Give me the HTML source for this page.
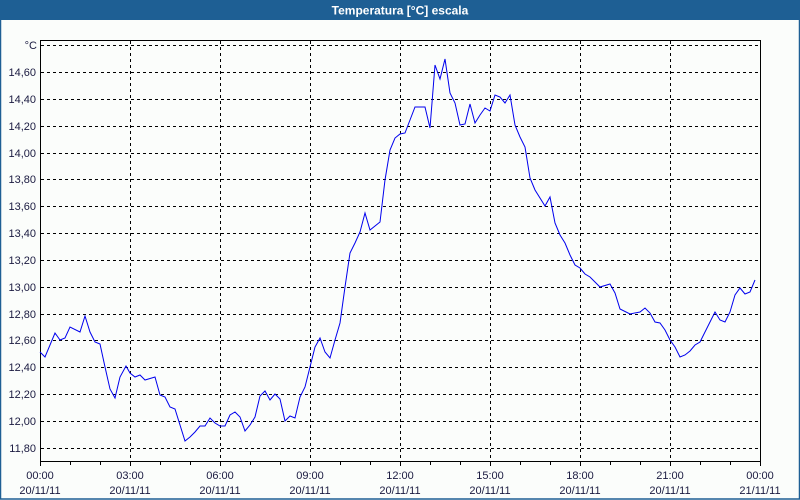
<!DOCTYPE html>
<html><head><meta charset="utf-8"><style>
html,body{margin:0;padding:0}
body{width:800px;height:500px;overflow:hidden;background:#fbfdfb;font-family:"Liberation Sans",sans-serif}
</style></head><body>
<svg width="800" height="500" xmlns="http://www.w3.org/2000/svg" style="display:block">
<rect x="0" y="0" width="800" height="500" fill="#fbfdfb"/>
<rect x="0.5" y="0.5" width="799" height="498.5" fill="none" stroke="#1e5f94" stroke-width="1.5"/>
<rect x="0" y="0" width="800" height="20" fill="#1e5f94"/>
<text x="400" y="14.5" text-anchor="middle" font-family="Liberation Sans, sans-serif" font-size="12" font-weight="bold" fill="#ffffff">Temperatura [°C] escala</text>
<g stroke="#000" stroke-width="1" stroke-dasharray="3,3" shape-rendering="crispEdges">
<line x1="41" y1="45.5" x2="760" y2="45.5"/>
<line x1="41" y1="72.5" x2="760" y2="72.5"/>
<line x1="41" y1="99.5" x2="760" y2="99.5"/>
<line x1="41" y1="126.5" x2="760" y2="126.5"/>
<line x1="41" y1="153.5" x2="760" y2="153.5"/>
<line x1="41" y1="179.5" x2="760" y2="179.5"/>
<line x1="41" y1="206.5" x2="760" y2="206.5"/>
<line x1="41" y1="233.5" x2="760" y2="233.5"/>
<line x1="41" y1="260.5" x2="760" y2="260.5"/>
<line x1="41" y1="287.5" x2="760" y2="287.5"/>
<line x1="41" y1="314.5" x2="760" y2="314.5"/>
<line x1="41" y1="340.5" x2="760" y2="340.5"/>
<line x1="41" y1="367.5" x2="760" y2="367.5"/>
<line x1="41" y1="394.5" x2="760" y2="394.5"/>
<line x1="41" y1="421.5" x2="760" y2="421.5"/>
<line x1="41" y1="448.5" x2="760" y2="448.5"/>
<line x1="130.5" y1="41" x2="130.5" y2="461"/>
<line x1="220.5" y1="41" x2="220.5" y2="461"/>
<line x1="310.5" y1="41" x2="310.5" y2="461"/>
<line x1="400.5" y1="41" x2="400.5" y2="461"/>
<line x1="490.5" y1="41" x2="490.5" y2="461"/>
<line x1="580.5" y1="41" x2="580.5" y2="461"/>
<line x1="670.5" y1="41" x2="670.5" y2="461"/>
</g>
<g stroke="#000" stroke-width="1" shape-rendering="crispEdges" fill="none">
<polyline points="40.5,461 40.5,40.5 760.5,40.5 760.5,461.5 40,461.5"/>
<path d="M40.5 461v5M70.5 461v4M100.5 461v4M130.5 461v5M160.5 461v4M190.5 461v4M220.5 461v5M250.5 461v4M280.5 461v4M310.5 461v5M340.5 461v4M370.5 461v4M400.5 461v5M430.5 461v4M460.5 461v4M490.5 461v5M520.5 461v4M550.5 461v4M580.5 461v5M610.5 461v4M640.5 461v4M670.5 461v5M700.5 461v4M730.5 461v4M760.5 461v5"/>
</g>
<polyline fill="none" stroke="#0000ee" stroke-width="1" points="40,352 45,357 55,333 60,340 65,338 70,327 80,332 85,316 90,332 95,342 100,344 105,367 110,389 115,398 120,377 126,366 130,373 135,377 140,375 145,380 155,377 160,395 165,397 170,407 175,409 185,441 190,437 195,432 200,426 205,426 210,418 215,423 220,426 225,426 230,415 235,412 240,417 245,431 250,425 255,417 260,396 265,391 270,400 275,394 280,399 285,421 290,416 295,418 300,397 305,387 310,367 315,347 320,338 325,352 330,358 335,340 340,323 345,287 350,253 355,243 360,232 365,213 370,230 380,222 385,180 390,150 395,138 400,134 405,133 410,120 415,107 425,107 430,128 435,65 440,79 445,59 450,93 455,103 460,125 465,124 470,104 475,123 480,115 485,108 490,111 495,95 500,97 505,103 510,95 515,125 520,137 525,147 530,178 535,190 545,206 550,197 555,223 560,235 565,243 570,255 575,265 580,268 585,274 590,277 600,287 610,284 615,293 620,309 630,314 640,312 645,308 650,313 655,322 660,323 665,330 670,340 675,347 680,357 685,355 690,351 695,345 700,342 705,332 710,322 715,312 720,320 725,322 730,312 735,295 740,288 745,294 750,292 755,280"/>
<g font-family="Liberation Sans, sans-serif" font-size="11" fill="#1a1a40" text-anchor="end">
<text x="37" y="49">°C</text>
<text x="36" y="76">14,60</text>
<text x="36" y="103">14,40</text>
<text x="36" y="130">14,20</text>
<text x="36" y="157">14,00</text>
<text x="36" y="183">13,80</text>
<text x="36" y="210">13,60</text>
<text x="36" y="237">13,40</text>
<text x="36" y="264">13,20</text>
<text x="36" y="291">13,00</text>
<text x="36" y="318">12,80</text>
<text x="36" y="344">12,60</text>
<text x="36" y="371">12,40</text>
<text x="36" y="398">12,20</text>
<text x="36" y="425">12,00</text>
<text x="36" y="452">11,80</text>
</g>
<g font-family="Liberation Sans, sans-serif" font-size="11" fill="#1a1a40" text-anchor="middle">
<text x="40" y="479">00:00</text><text x="40" y="494">20/11/11</text>
<text x="130" y="479">03:00</text><text x="130" y="494">20/11/11</text>
<text x="220" y="479">06:00</text><text x="220" y="494">20/11/11</text>
<text x="310" y="479">09:00</text><text x="310" y="494">20/11/11</text>
<text x="400" y="479">12:00</text><text x="400" y="494">20/11/11</text>
<text x="490" y="479">15:00</text><text x="490" y="494">20/11/11</text>
<text x="580" y="479">18:00</text><text x="580" y="494">20/11/11</text>
<text x="670" y="479">21:00</text><text x="670" y="494">20/11/11</text>
<text x="760" y="479">00:00</text><text x="760" y="494">21/11/11</text>
</g>
</svg>
</body></html>
